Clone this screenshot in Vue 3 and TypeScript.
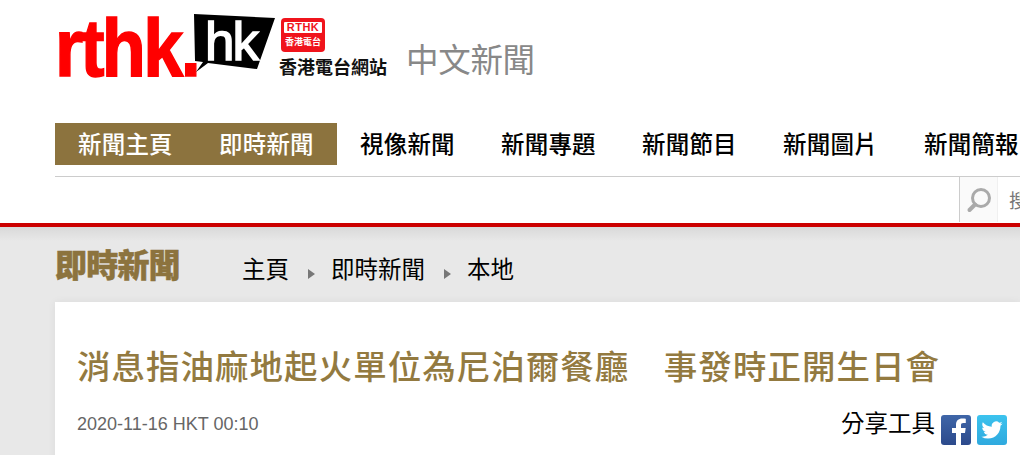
<script setup lang="ts">
const navItems = ['新聞主頁', '即時新聞', '視像新聞', '新聞專題', '新聞節目', '新聞圖片', '新聞簡報']
const activeCount = 2
const crumbs = ['主頁', '即時新聞', '本地']
</script>

<template>
  <div class="page">
    <header class="top">
      <div class="logo">
        <div class="logo-word"><span>rthk.</span></div>
        <div class="logo-bubble">
          <svg width="82" height="60" viewBox="0 0 82 60">
            <polygon points="0,0 81,4 63,55 14,49 2,58 9,48 1,47" fill="#000" />
          </svg>
          <span class="hk">hk</span>
        </div>
        <div class="logo-side">
          <div class="badge">
            <div class="badge-top">RTHK</div>
            <div class="badge-bottom">香港電台</div>
          </div>
          <div class="station">香港電台網站</div>
        </div>
        <div class="logo-section">中文新聞</div>
      </div>
    </header>

    <nav class="nav">
      <a v-for="(item, i) in navItems" :key="item" class="nav-item" :class="{ active: i < activeCount }">{{ item }}</a>
    </nav>

    <div class="search-row">
      <div class="search">
        <div class="search-btn">
          <svg width="26" height="26" viewBox="0 0 26 26">
            <circle cx="15" cy="11" r="8.5" fill="none" stroke="#aaa" stroke-width="3" />
            <path d="M9 17.5 L3.5 23" stroke="#aaa" stroke-width="4" stroke-linecap="round" />
          </svg>
        </div>
        <div class="search-input">搜尋</div>
      </div>
    </div>

    <main class="main">
      <div class="crumb-row">
        <div class="section-title">即時新聞</div>
        <ul class="crumbs">
          <li v-for="(c, i) in crumbs" :key="c" class="crumb">
            <span>{{ c }}</span>
            <i v-if="i < crumbs.length - 1" class="arrow"></i>
          </li>
        </ul>
      </div>

      <article class="card">
        <h1 class="headline">消息指油麻地起火單位為尼泊爾餐廳　事發時正開生日會</h1>
        <div class="meta">
          <div class="date">2020-11-16 HKT 00:10</div>
          <div class="share">
            <span class="share-label">分享工具</span>
            <a class="share-icon fb">
              <svg width="30" height="30" viewBox="0 0 30 30">
                <path d="M20 30 V18 H24 L24.7 13 H20 V10.2 C20 8.8 20.5 8 22.3 8 H24.8 V3.8 C24.2 3.7 22.9 3.6 21.2 3.6 C17.5 3.6 15 5.8 15 9.7 V13 H11 V18 H15 V30 Z" fill="#fff" />
              </svg>
            </a>
            <a class="share-icon tw">
              <svg width="30" height="30" viewBox="-5 -5 34 34">
                <path d="M23.953 4.57a10 10 0 01-2.825.775 4.958 4.958 0 002.163-2.723c-.951.555-2.005.959-3.127 1.184a4.92 4.92 0 00-8.384 4.482C7.69 8.095 4.067 6.13 1.64 3.162a4.822 4.822 0 00-.666 2.475c0 1.71.87 3.213 2.188 4.096a4.904 4.904 0 01-2.228-.616v.06a4.923 4.923 0 003.946 4.827 4.996 4.996 0 01-2.212.085 4.936 4.936 0 004.604 3.417 9.867 9.867 0 01-6.102 2.105c-.39 0-.779-.023-1.17-.067a13.995 13.995 0 007.557 2.209c9.053 0 13.998-7.496 13.998-13.985 0-.21 0-.42-.015-.63A9.935 9.935 0 0024 4.59z" fill="#fff" />
              </svg>
            </a>
          </div>
        </div>
      </article>
    </main>
  </div>
</template>

<style>
html, body {
  margin: 0;
  overflow: hidden;
  background: #fff;
}
</style>

<style scoped>
.page {
  width: 1020px;
  height: 455px;
  overflow: hidden;
  font-family: "Noto Sans CJK TC", "Liberation Sans", sans-serif;
  color: #000;
}

.top {
  height: 123px;
  padding-left: 58px;
  box-sizing: border-box;
}

.logo {
  display: flex;
  height: 100%;
}

.logo-word {
  width: 136px;
  height: 96px;
  font-family: "Liberation Sans", sans-serif;
  font-weight: 700;
  font-size: 82px;
  line-height: 96px;
  letter-spacing: -3px;
  color: #f00;
  -webkit-text-stroke: 1.5px #f00;
}

.logo-word span {
  display: inline-block;
  margin-left: -3px;
  transform: scaleX(0.88);
  transform-origin: left center;
  white-space: nowrap;
}

.logo-bubble {
  position: relative;
  width: 82px;
  height: 60px;
  margin-top: 14px;
}

.logo-bubble svg {
  display: block;
}

.hk {
  position: absolute;
  left: 11px;
  top: -2px;
  font-family: "Liberation Sans", sans-serif;
  font-size: 53px;
  line-height: 60px;
  letter-spacing: -2px;
  color: #fff;
  -webkit-text-stroke: 1.5px #fff;
}

.logo-side {
  width: 108px;
  margin-left: 3px;
  padding-top: 18px;
}

.badge {
  width: 44px;
  height: 34px;
  margin-left: 2px;
  box-sizing: border-box;
  background: #f0141c;
  border-radius: 4px;
  padding: 4px 3px 0;
}

.badge-top {
  height: 11px;
  line-height: 11px;
  background: #fff;
  color: #f0141c;
  border-radius: 1px;
  font-family: "Liberation Sans", sans-serif;
  font-size: 11px;
  font-weight: 700;
  letter-spacing: 0.5px;
  text-align: center;
}

.badge-bottom {
  margin-top: 3px;
  color: #fff;
  font-size: 9px;
  line-height: 12px;
  font-weight: 700;
  text-align: center;
  white-space: nowrap;
}

.station {
  margin-top: 4px;
  font-size: 18px;
  line-height: 21px;
  font-weight: 700;
  color: #111;
  white-space: nowrap;
}

.logo-section {
  margin-left: 19px;
  margin-top: 35px;
  font-size: 32.5px;
  line-height: 46px;
  letter-spacing: -0.3px;
  color: #888;
  white-space: nowrap;
}

.nav {
  display: flex;
  height: 42px;
  margin-left: 55px;
  white-space: nowrap;
}

.nav-item {
  flex: none;
  width: 141px;
  box-sizing: border-box;
  padding-left: 23px;
  font-size: 23.5px;
  letter-spacing: 0.2px;
  line-height: 41px;
  font-weight: 500;
  color: #000;
}

.nav-item.active {
  background: #8c733e;
  color: #fff;
}

.search-row {
  display: flex;
  justify-content: flex-end;
  height: 46px;
  margin: 11px 0 0 55px;
  border-top: 1px solid #ccc;
}

.search {
  display: flex;
  width: 61px;
  height: 45px;
  overflow: hidden;
  border-left: 1px solid #ccc;
  box-sizing: border-box;
}

.search-btn {
  flex: none;
  width: 38px;
  display: flex;
  align-items: center;
  justify-content: center;
  background: #fafafa;
  border-right: 1px solid #f0f0f0;
  box-sizing: border-box;
}

.search-input {
  flex: none;
  padding-left: 11px;
  font-size: 19px;
  line-height: 45px;
  color: #777;
  white-space: nowrap;
}

.main {
  height: 228px;
  border-top: 4px solid #c00;
  background: linear-gradient(#d9d9d9 0, #e8e8e8 14px);
  padding-left: 55px;
}

.crumb-row {
  display: flex;
  height: 75px;
  align-items: center;
}

.section-title {
  width: 187px;
  flex: none;
  font-size: 32px;
  font-weight: 900;
  letter-spacing: -0.8px;
  color: #8c733e;
  line-height: 40px;
  margin-top: -3px;
  -webkit-text-stroke: 0.5px #8c733e;
}

.crumbs {
  display: flex;
  gap: 16px;
  list-style: none;
  margin: 6px 0 0;
  padding: 0;
}

.crumb {
  display: flex;
  align-items: center;
  gap: 19px;
  font-size: 23.5px;
  line-height: 32px;
  color: #000;
}

.arrow {
  width: 0;
  height: 0;
  margin-top: 12px;
  border-left: 7px solid #777;
  border-top: 5.5px solid transparent;
  border-bottom: 5.5px solid transparent;
}

.card {
  background: #fff;
  padding: 40px 0 0 22px;
  height: 153px;
  box-shadow: 0 0 8px rgba(0, 0, 0, 0.06);
}

.headline {
  margin: 0;
  font-size: 33.5px;
  font-weight: 500;
  letter-spacing: 1.02px;
  line-height: 46px;
  color: #937a40;
  white-space: nowrap;
}

.meta {
  display: flex;
  justify-content: space-between;
  margin-top: 21px;
  padding-right: 13px;
}

.date {
  font-family: "Liberation Sans", sans-serif;
  font-size: 18px;
  line-height: 30px;
  color: #666;
}

.share {
  display: flex;
  align-items: flex-start;
  gap: 6px;
  margin-top: -3px;
}

.share-label {
  font-size: 23.5px;
  line-height: 32px;
}

.share-icon {
  display: block;
  width: 30px;
  height: 30px;
  margin-top: 9px;
  border-radius: 3px;
  overflow: hidden;
}

.fb {
  background: linear-gradient(#3f66a8, #2c4a8c);
}

.tw {
  background: linear-gradient(#3cc3ee, #2fa9de);
}
</style>
